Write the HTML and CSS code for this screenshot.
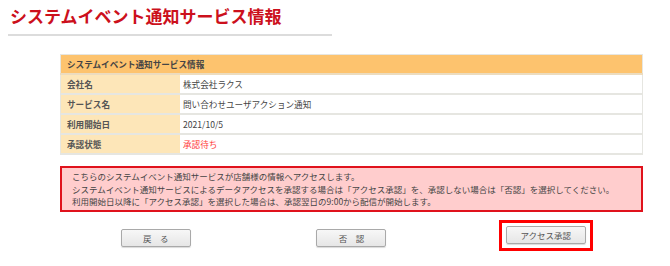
FILE: index.html
```html
<!DOCTYPE html>
<html lang="ja">
<head>
    <meta charset="UTF-8">
    <meta name="viewport" content="width=device-width, initial-scale=1.0">
    <title>システムイベント通知サービス情報</title>
    <link rel="stylesheet" href="styles.css">
</head>
<body>
    <div class="page-title">
        <h1>システムイベント通知サービス情報</h1>
    </div>
    <div class="content">
        <table class="info-table">
            <tr>
                <th colspan="2">システムイベント通知サービス情報</th>
            </tr>
            <tr>
                <td class="label">会社名</td>
                <td>株式会社ラクス</td>
            </tr>
            <tr>
                <td class="label">サービス名</td>
                <td>問い合わせユーザアクション通知</td>
            </tr>
            <tr>
                <td class="label">利用開始日</td>
                <td>2021/10/5</td>
            </tr>
            <tr>
                <td class="label">承認状態</td>
                <td class="pending">承認待ち</td>
            </tr>
        </table>
        <div class="notice">
            こちらのシステムイベント通知サービスが店舗様の情報へアクセスします。<br>
            システムイベント通知サービスによるデータアクセスを承認する場合は「アクセス承認」を、承認しない場合は「否認」を選択してください。<br>
            利用開始日以降に「アクセス承認」を選択した場合は、承認翌日の9:00から配信が開始します。
        </div>
        <div class="buttons">
            <div class="btn-cell"><button type="button" class="btn">戻　る</button></div>
            <div class="btn-cell"><button type="button" class="btn">否　認</button></div>
            <div class="btn-cell"><span class="highlight"><button type="button" class="btn btn-wide">アクセス承認</button></span></div>
        </div>
    </div>
</body>
</html>
```

FILE: styles.css
```css
body {
    font-family: "Noto Sans CJK JP", "Noto Sans", sans-serif;
    background-color: #fff;
    color: #333;
    margin: 0;
}
.page-title {
    width: 324px;
    margin-left: 8px;
    padding-top: 4px;
    border-bottom: 2px solid #dcdcdc;
}
.page-title h1 {
    margin: 0 0 0 2px;
    height: 30px;
    font-size: 17px;
    line-height: 24px;
    font-weight: bold;
    color: #cc101c;
}
.content {
    width: 583px;
    margin: 18px 0 0 60px;
}
.info-table {
    width: 100%;
    border-collapse: collapse;
    border: 1px solid #e6e6e1;
    font-size: 8.6px;
}
.info-table th {
    height: 18px;
    padding: 0 6px;
    text-align: left;
    font-weight: bold;
    color: #444;
    background-color: #fdc36e;
    border-bottom: 2px solid #ecdcbf;
}
.info-table td {
    height: 18px;
    padding: 0 2px 0 3px;
    color: #444;
    border-bottom: 2px solid #e6e6e1;
}
.info-table td.label {
    width: 111px;
    padding-left: 6px;
    background-color: #fde6b8;
    font-weight: bold;
    color: #555;
}
.info-table td.pending {
    color: #ff3b3b;
}
.notice {
    margin-top: 11px;
    padding: 2px 10px;
    border: 2px solid #e0121c;
    background-color: #ffcdcd;
    font-size: 8.5px;
    line-height: 12.5px;
    color: #444;
}
.buttons {
    display: grid;
    grid-template-columns: repeat(3, 1fr);
    justify-items: center;
    align-items: center;
    margin-top: 8px;
}
.btn {
    width: 70px;
    height: 18px;
    padding: 0;
    font-family: "Noto Sans CJK JP", sans-serif;
    font-size: 8.5px;
    color: #555;
    background: linear-gradient(#f7f7f7, #e6e6e6);
    border: 1px solid #a9a9a9;
    border-radius: 2px;
    box-shadow: 0 1px 1px rgba(0,0,0,0.15);
}
.btn-wide {
    width: 80px;
}
.btn-cell:first-child {
    margin-left: -3px;
}
.highlight {
    display: inline-block;
    padding: 3px 4px 4px 4px;
    border: 3px solid #ff0000;
    line-height: 0;
}
```
